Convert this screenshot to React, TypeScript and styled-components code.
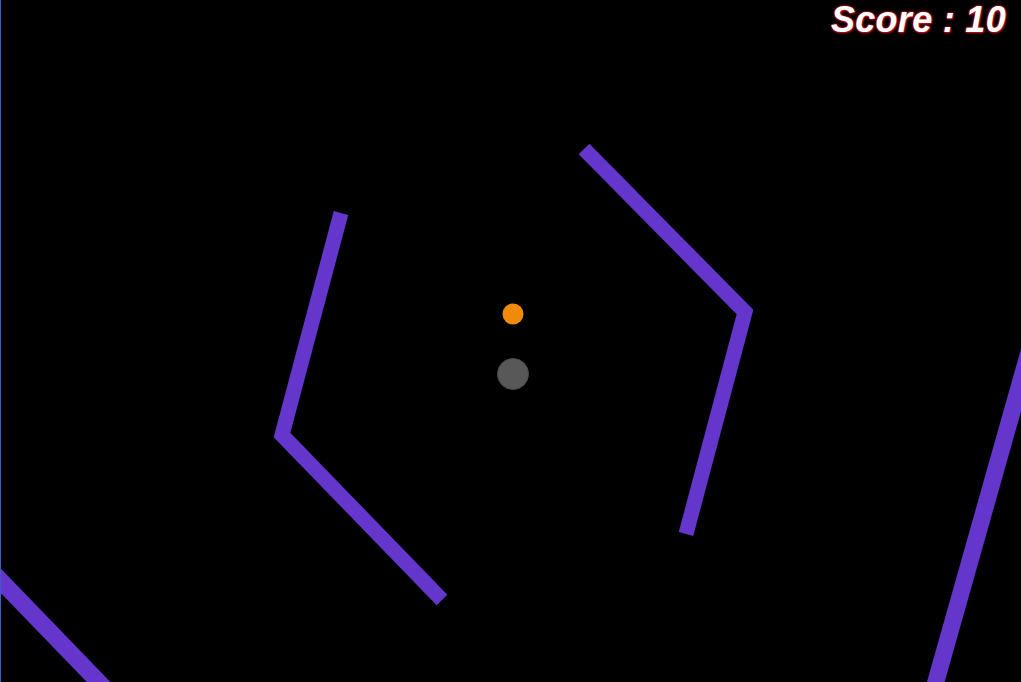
import styled, { createGlobalStyle } from 'styled-components';

const GlobalStyle = createGlobalStyle`
  html, body {
    margin: 0;
    padding: 0;
    background: #000;
    overflow: hidden;
  }
`;

const WALL = '#6536cc';

type Wall = { points: string; width: number };

// inner hexagon walls are a bit thinner than the outer ring
const walls: Wall[] = [
  { points: '584,149 745,312 686,534', width: 15 },
  { points: '341,213 282,435 442,600', width: 15 },
  { points: '1038,320 930.7,700', width: 17 },
  { points: '-10,569.6 116,700', width: 17 },
];

function App(): JSX.Element {
  return (
    <>
      <GlobalStyle />
      <Stage>
        <Field viewBox="0 0 1021 682" width="1021" height="682">
          {walls.map((w, i) => (
            <polyline
              key={`wall-${i + 1}`}
              points={w.points}
              fill="none"
              stroke={WALL}
              strokeWidth={w.width}
              strokeLinejoin="miter"
            />
          ))}
          <circle cx={513} cy={374} r={15.5} fill="#585858" stroke="#4a4a4a" strokeWidth={1} />
          <circle cx={513} cy={314} r={10.5} fill="#f08a0a" />
        </Field>
        <Score>Score : 10</Score>
      </Stage>
    </>
  );
}

export default App;

const Stage = styled.div`
  position: relative;
  width: 1021px;
  height: 682px;
  background: #000;
  border-left: 1px solid #3a5bc8;
  box-sizing: border-box;
  overflow: hidden;
`;

const Field = styled.svg`
  display: block;
  margin-left: -1px;
`;

const Score = styled.div`
  position: absolute;
  top: 0;
  right: 15px;
  font-family: 'Liberation Sans', Arial, sans-serif;
  font-weight: bold;
  font-style: italic;
  font-size: 36px;
  letter-spacing: 0.3px;
  line-height: 40px;
  color: #fff;
  text-shadow: 0 0 2px #e0202a, 0 0 3px #c0101a, 1px 1px 2px #b00010;
`;
